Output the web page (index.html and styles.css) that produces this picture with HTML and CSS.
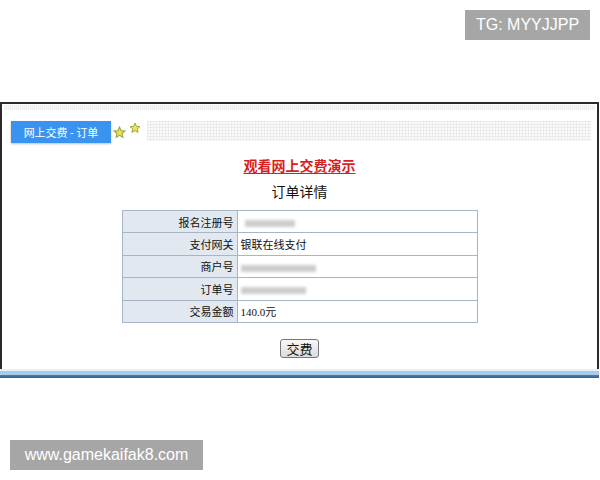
FILE: index.html
```html
<!DOCTYPE html>
<html lang="zh-CN">
<head>
<meta charset="utf-8">
<link rel="stylesheet" href="styles.css">
</head>
<body>
<div class="top">
  <div class="mark mark-tg">TG: MYYJJPP</div>
</div>
<div class="frame">
  <div class="strip"></div>
  <div class="head">
    <div class="tab">网上交费 - 订单</div>
    <svg class="star s1" width="13" height="13" viewBox="0 0 24 24"><path d="M12 2l2.9 6.6 7.1.6-5.4 4.7 1.6 7-6.2-3.7-6.2 3.7 1.6-7L2 9.2l7.1-.6z" fill="#f4e04a" stroke="#9aa84a" stroke-width="2"/></svg>
    <svg class="star s2" width="12" height="12" viewBox="0 0 24 24"><path d="M12 2l2.9 6.6 7.1.6-5.4 4.7 1.6 7-6.2-3.7-6.2 3.7 1.6-7L2 9.2l7.1-.6z" fill="#f4e04a" stroke="#9aa84a" stroke-width="2"/></svg>
    <div class="dots"></div>
  </div>
  <div class="body">
    <a class="title">观看网上交费演示</a>
    <div class="sub">订单详情</div>
    <table class="info">
      <tr><th>报名注册号</th><td><span class="blur b1"></span></td></tr>
      <tr><th>支付网关</th><td>银联在线支付</td></tr>
      <tr><th>商户号</th><td><span class="blur b2"></span></td></tr>
      <tr><th>订单号</th><td><span class="blur b3"></span></td></tr>
      <tr><th>交易金额</th><td class="money">140.0元</td></tr>
    </table>
    <button class="pay">交费</button>
  </div>
  <div class="band"></div>
</div>
<div class="bottom">
  <div class="mark mark-url">www.gamekaifak8.com</div>
</div>
</body>
</html>
```
FILE: styles.css
```css
* { box-sizing: border-box; }
html, body { margin: 0; padding: 0; background: #fff; }
body {
  width: 600px; height: 480px; overflow: hidden;
  font-family: "Noto Sans CJK SC", "Liberation Sans", sans-serif;
}
.top { height: 102px; display: flex; justify-content: flex-end; padding: 10px 10px 0 0; }
.mark {
  background: #a6a6a6; color: #fff;
  font-family: "Liberation Sans", sans-serif; font-size: 16px;
  height: 30px; line-height: 30px; text-align: center;
}
.mark-tg { width: 125px; }
.frame {
  height: 276px; width: 599px;
  border-top: 2px solid #2a2a2a; border-left: 2px solid #2a2a2a; border-right: 2px solid #2a2a2a;
  display: flex; flex-direction: column;
}
.strip {
  height: 5px; margin: 1px 2px 0;
  background-image: linear-gradient(90deg, #eeeeee 1px, #f7f7f7 1px);
  background-size: 2px 2px;
}
.head { display: flex; align-items: flex-start; height: 36px; padding: 11px 0 0 9px; }
.tab {
  width: 100px; height: 22px; background: #3a94ef; color: #fff;
  font-size: 11px; line-height: 22px; text-align: center;
  box-shadow: 0 1px 2px rgba(0,0,0,0.25);
}
.star.s1 { margin: 5px 0 0 2px; }
.star.s2 { margin: 1px 0 0 3px; }
.dots {
  flex: 1; height: 20px; margin: 0 6px 0 6px;
  background-color: #fbfbfb;
  background-image: linear-gradient(90deg, #ebebeb 1px, transparent 1px), linear-gradient(#ebebeb 1px, transparent 1px);
  background-size: 3px 3px;
}
.body { flex: 1; display: flex; flex-direction: column; align-items: center; }
.title {
  margin-top: 10px; color: #d81e1e; font-weight: bold; font-size: 14px; line-height: 18px;
  text-decoration: underline; text-underline-offset: 2px;
}
.sub { margin-top: 8px; font-size: 14px; line-height: 18px; color: #111; }
.info {
  margin-top: 10px; width: 356px; border-collapse: collapse;
  font-size: 11px; color: #111;
}
.info th, .info td { border: 1px solid #a7b5c4; height: 22.4px; padding: 0 3px; }
.info th { width: 115px; background: #e1e8ef; text-align: right; font-weight: normal; }
.info td { background: #fff; text-align: left; }
.info td.money { font-family: "Liberation Serif", "Noto Sans CJK SC", serif; font-size: 11px; }
.blur { display: inline-block; height: 7px; background: #cdcdcd; filter: blur(1.5px); vertical-align: middle; }
.b1 { width: 50px; margin-left: 4px; }
.b2 { width: 75px; }
.b3 { width: 65px; }
.pay {
  margin-top: 16px; width: 39px; height: 19px; padding: 0;
  font-family: "Noto Sans CJK SC", sans-serif; font-size: 13px; line-height: 15px; color: #111;
  background: linear-gradient(#f8f8f8, #dcdcdc); border: 1px solid #777; border-radius: 3px;
}
.band {
  height: 9px; margin: 0 -2px;
  background: linear-gradient(#e6eef6 0, #e6eef6 2px, #a9cbe8 2px, #a9cbe8 6px, #4b7fb3 6px, #2f5f94 9px);
}
.bottom { padding: 62px 0 0 10px; }
.mark-url { width: 193px; }
```
